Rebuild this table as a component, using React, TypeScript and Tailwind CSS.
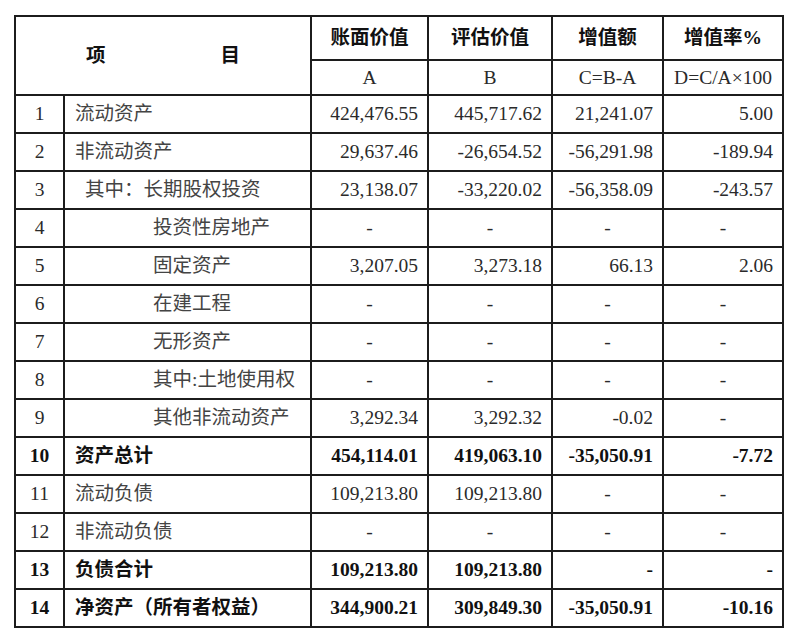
import React from 'react';

type Row = {
  no: string;
  name: string;
  indent: 0 | 1 | 2;
  a: string;
  b: string;
  c: string;
  d: string;
  bold?: boolean;
  dashRight?: boolean;
};

const rows: Row[] = [
  { no: '1', name: '流动资产', indent: 0, a: '424,476.55', b: '445,717.62', c: '21,241.07', d: '5.00' },
  { no: '2', name: '非流动资产', indent: 0, a: '29,637.46', b: '-26,654.52', c: '-56,291.98', d: '-189.94' },
  { no: '3', name: '其中：长期股权投资', indent: 1, a: '23,138.07', b: '-33,220.02', c: '-56,358.09', d: '-243.57' },
  { no: '4', name: '投资性房地产', indent: 2, a: '-', b: '-', c: '-', d: '-' },
  { no: '5', name: '固定资产', indent: 2, a: '3,207.05', b: '3,273.18', c: '66.13', d: '2.06' },
  { no: '6', name: '在建工程', indent: 2, a: '-', b: '-', c: '-', d: '-' },
  { no: '7', name: '无形资产', indent: 2, a: '-', b: '-', c: '-', d: '-' },
  { no: '8', name: '其中:土地使用权', indent: 2, a: '-', b: '-', c: '-', d: '-' },
  { no: '9', name: '其他非流动资产', indent: 2, a: '3,292.34', b: '3,292.32', c: '-0.02', d: '-' },
  { no: '10', name: '资产总计', indent: 0, a: '454,114.01', b: '419,063.10', c: '-35,050.91', d: '-7.72', bold: true },
  { no: '11', name: '流动负债', indent: 0, a: '109,213.80', b: '109,213.80', c: '-', d: '-' },
  { no: '12', name: '非流动负债', indent: 0, a: '-', b: '-', c: '-', d: '-' },
  { no: '13', name: '负债合计', indent: 0, a: '109,213.80', b: '109,213.80', c: '-', d: '-', bold: true, dashRight: true },
  { no: '14', name: '净资产（所有者权益）', indent: 0, a: '344,900.21', b: '309,849.30', c: '-35,050.91', d: '-10.16', bold: true },
];

const cell = 'border-2 border-[#1c1c1c]';

export default function App() {
  return (
    <div
      className="w-[800px] h-[642px] bg-white pt-[15px] pl-[14px] text-[19.5px] text-[#2a2a2a]"
      style={{ fontFamily: '"Liberation Serif", "Noto Sans CJK SC", serif' }}
    >
      <table className="border-collapse table-fixed w-[768px]">
        <colgroup>
          <col className="w-[49px]" />
          <col className="w-[247px]" />
          <col className="w-[117px]" />
          <col className="w-[124px]" />
          <col className="w-[111px]" />
          <col className="w-[120px]" />
        </colgroup>
        <thead>
          <tr className="h-[44px]">
            <th colSpan={2} rowSpan={2} className={`${cell} font-bold text-[#111]`}>
              <div className="flex justify-between px-[70px]">
                <span>项</span>
                <span>目</span>
              </div>
            </th>
            <th className={`${cell} font-bold text-[#111]`}>账面价值</th>
            <th className={`${cell} font-bold text-[#111]`}>评估价值</th>
            <th className={`${cell} font-bold text-[#111]`}>增值额</th>
            <th className={`${cell} font-bold text-[#111]`}>增值率%</th>
          </tr>
          <tr className="h-[35px]">
            <td className={`${cell} text-center`}>A</td>
            <td className={`${cell} text-center`}>B</td>
            <td className={`${cell} text-center`}>C=B-A</td>
            <td className={`${cell} text-center`}>D=C/A×100</td>
          </tr>
        </thead>
        <tbody>
          {rows.map((r) => {
            const weight = r.bold ? 'font-bold text-[#111]' : '';
            const pad = r.indent === 0 ? 'pl-[10px]' : r.indent === 1 ? 'pl-[20px]' : 'pl-[88px]';
            const num = (v: string) => {
              const align = v === '-' && !r.dashRight ? 'text-center' : 'text-right pr-[9px]';
              return <td className={`${cell} ${align} ${weight}`}>{v}</td>;
            };
            return (
              <tr key={r.no} className="h-[38px]">
                <td className={`${cell} text-center ${weight}`}>{r.no}</td>
                <td className={`${cell} ${pad} whitespace-nowrap ${r.bold ? 'font-bold text-[#111]' : 'text-[#444]'}`}>
                  {r.name}
                </td>
                {num(r.a)}
                {num(r.b)}
                {num(r.c)}
                {num(r.d)}
              </tr>
            );
          })}
        </tbody>
      </table>
    </div>
  );
}
